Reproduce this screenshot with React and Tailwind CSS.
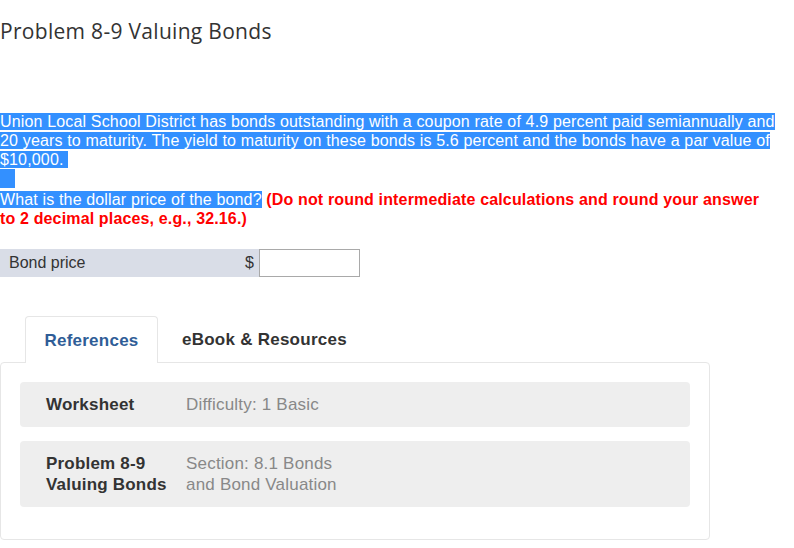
import React from 'react'

const sel = 'bg-[#3390ff] text-white'

const RefRow = ({ label, children }) => {
  return (
    <div className="flex rounded-[4px] bg-[#eeeeee] py-3 pl-[26px] text-[17px] leading-[21px] tracking-[0.2px]">
      <div className="w-[140px] shrink-0 font-bold text-[#333]">{label}</div>
      <div className="text-[#888]">{children}</div>
    </div>
  )
}

const App = () => {
  return (
    <div className="w-[794px] h-[548px] overflow-hidden bg-white font-['Liberation_Sans',Arial,sans-serif] text-[#333]">
      <h1 className="pt-[17px] font-['Open_Sans',sans-serif] text-[21px] leading-[28px] text-[#333] tracking-[0.3px]">
        Problem 8-9 Valuing Bonds
      </h1>

      <div className="mt-[67px] w-[780px] text-[16px] leading-[19px] tracking-[0.16px]">
        <span className={sel}>
          Union Local School District has bonds outstanding with a coupon rate of 4.9 percent paid semiannually and 20
          years to maturity. The yield to maturity on these bonds is 5.6 percent and the bonds have a par value of
          $10,000.&nbsp;
        </span>
      </div>
      <div className="h-[19px] text-[16px] leading-[19px]">
        <span className={`inline-block h-[19px] w-[15px] ${sel}`}></span>
      </div>
      <div className="mt-[2px] w-[765px] text-[16px] leading-[19px] tracking-[0.15px]">
        <span className={sel}>What is the dollar price of the bond?</span>{' '}
        <span className="font-bold text-[#ff0000]">
          (Do not round intermediate calculations and round your answer to 2 decimal places, e.g., 32.16.)
        </span>
      </div>

      <div className="mt-[21px] flex items-center">
        <div className="flex h-[28px] w-[259px] items-center justify-between bg-[#d9dde7] pl-[9px] pr-[5px] text-[16px]">
          <span>Bond price</span>
          <span>$</span>
        </div>
        <input className="h-[28px] w-[101px] border border-[#a9a9a9] bg-white outline-none" />
      </div>

      <div className="mt-[39px] w-[710px]">
        <div className="flex text-[17px] font-bold tracking-[0.25px]">
          <div className="relative -mb-px ml-[25px] flex h-[47px] w-[133px] items-center justify-center rounded-t-[4px] border border-b-0 border-[#e6e6e6] bg-white pt-[2px] text-[#2f5d97]">
            References
          </div>
          <div className="flex h-[46px] items-center pl-[24px] pt-[2px] text-[#333]">eBook &amp; Resources</div>
        </div>
        <div className="flex h-[178px] flex-col gap-[14px] rounded-[4px] border border-[#e6e6e6] px-[19px] pt-[19px]">
          <RefRow label="Worksheet">Difficulty: 1 Basic</RefRow>
          <RefRow
            label={
              <>
                Problem 8-9
                <br />
                Valuing Bonds
              </>
            }
          >
            Section: 8.1 Bonds
            <br />
            and Bond Valuation
          </RefRow>
        </div>
      </div>
    </div>
  )
}

export default App
